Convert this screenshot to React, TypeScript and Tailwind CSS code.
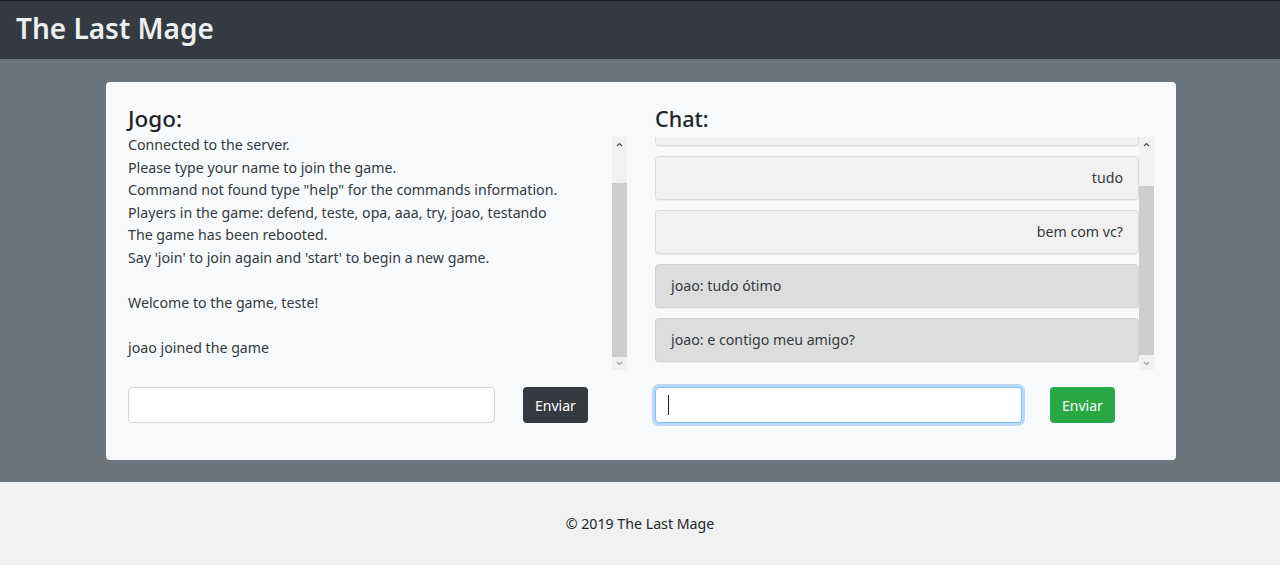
import React from "react"

const font = { fontFamily: '"Segoe UI", "Noto Sans", sans-serif' }

const logLines = [
  "Connected to the server.",
  "Please type your name to join the game.",
  'Command not found type "help" for the commands information.',
  "Players in the game: defend, teste, opa, aaa, try, joao, testando",
  "The game has been rebooted.",
  "Say 'join' to join again and 'start' to begin a new game.",
  "",
  "Welcome to the game, teste!",
  "",
  "joao joined the game",
]

// the first one is scrolled almost out of view
const messages = [
  { text: "", mine: true },
  { text: "tudo", mine: true },
  { text: "bem com vc?", mine: true },
  { text: "joao: tudo ótimo", mine: false },
  { text: "joao: e contigo meu amigo?", mine: false },
]

function Scrollbar({ thumbTop, thumbBottom }: { thumbTop: string; thumbBottom: string }) {
  return (
    <div className="flex w-[15px] shrink-0 flex-col bg-[#f1f1f1]">
      <div className="flex h-[15px] items-center justify-center text-[#505050]">
        <svg width="7" height="5" viewBox="0 0 7 5">
          <path d="M1 4 L3.5 1.5 L6 4" fill="none" stroke="currentColor" strokeWidth="1.2" />
        </svg>
      </div>
      <div className={`${thumbTop} ${thumbBottom} flex flex-1 flex-col`}>
        <div className="flex-1 bg-[#cdcdcd]" />
      </div>
      <div className="flex h-[13px] items-center justify-center text-[#a3a3a3]">
        <svg width="7" height="5" viewBox="0 0 7 5">
          <path d="M1 1 L3.5 3.5 L6 1" fill="none" stroke="currentColor" strokeWidth="1.2" />
        </svg>
      </div>
    </div>
  )
}

export default function App() {
  return (
    <div className="flex min-h-[579px] flex-col bg-white text-[#212529]" style={font}>
      <header className="flex h-[59px] items-center border-t border-[#1f2226] bg-[#343a40] px-4 pb-[5px]">
        <h1 className="text-[28px] font-semibold leading-none text-[#eceef0]">The Last Mage</h1>
      </header>

      <main className="flex h-[423px] bg-[#6c757d] pl-[106px] pt-[23px] pb-[22px]">
        <div className="flex w-[1070px] gap-[28px] rounded-[4px] bg-[#f8f9fa] px-[22px] pt-[24px]">
          {/* jogo */}
          <section className="flex w-[499px] flex-col">
            <h2 className="text-[22.5px] font-medium leading-[26px] text-[#212529]">Jogo:</h2>
            <div className="mt-[5px] flex h-[233px]">
              <div className="flex-1 text-[14.2px] leading-[22.6px] text-[#343a40]">
                <div className="-mt-[3px]">
                  {logLines.map((l, i) => (
                    <div key={i} className="h-[22.6px] whitespace-nowrap">
                      {l}
                    </div>
                  ))}
                </div>
              </div>
              <Scrollbar thumbTop="pt-[31px]" thumbBottom="pb-0" />
            </div>
            <div className="mt-[17px] flex items-center gap-[28px]">
              <input
                className="h-[36px] w-[367px] rounded-[4px] border border-[#ced4da] bg-white px-3 text-[15px] outline-none"
                style={font}
              />
              <button className="h-[36px] rounded-[4px] bg-[#343a40] px-3 text-[14px] text-white">Enviar</button>
            </div>
          </section>

          {/* chat */}
          <section className="flex w-[499px] flex-col">
            <h2 className="text-[21.5px] font-medium leading-[26px] text-[#212529]">Chat:</h2>
            <div className="mt-[5px] flex h-[233px]">
              <div className="flex flex-1 flex-col justify-end gap-[10px] overflow-hidden pb-[8px]">
                {messages.map((m, i) => (
                  <div
                    key={i}
                    className={`flex h-[44px] shrink-0 items-center rounded-[4px] border px-[15px] text-[14.2px] text-[#343a40] shadow-[0_1px_1px_rgba(0,0,0,0.05)] ${
                      m.mine ? "justify-end border-[#dcdcdc] bg-[#f1f1f1]" : "justify-start border-[#d2d2d2] bg-[#dddddd]"
                    }`}
                  >
                    {m.text}
                  </div>
                ))}
              </div>
              <Scrollbar thumbTop="pt-[34px]" thumbBottom="pb-[2px]" />
            </div>
            <div className="mt-[17px] flex items-center gap-[28px]">
              <div className="flex h-[36px] w-[367px] items-center rounded-[4px] border border-[#80bdff] bg-white px-3 shadow-[0_0_0_3px_rgba(0,123,255,0.25)]">
                <span className="h-[20px] w-px bg-[#212529]" />
              </div>
              <button className="h-[36px] rounded-[4px] bg-[#28a745] px-3 text-[14px] text-white">Enviar</button>
            </div>
          </section>
        </div>
      </main>

      <footer className="flex h-[83px] items-center justify-center bg-[#f1f1f1] text-[14.2px] text-[#212529]">
        © 2019 The Last Mage
      </footer>
    </div>
  )
}
